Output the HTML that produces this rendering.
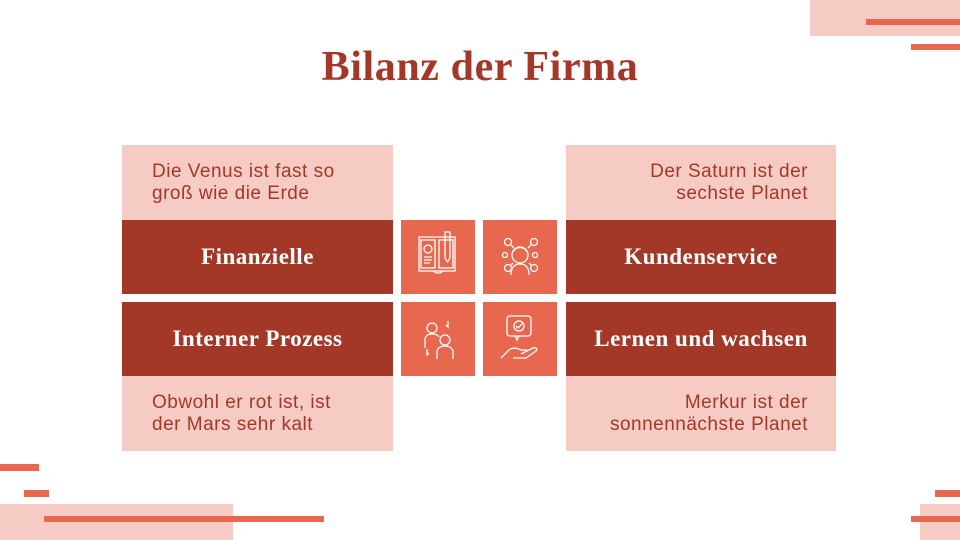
<!DOCTYPE html>
<html><head><meta charset="utf-8"><style>
body{margin:0;width:960px;height:540px;position:relative;overflow:hidden;background:#fff;font-family:"Liberation Sans",sans-serif}
.a{position:absolute}
.p{background:#f6cbc3}.o{background:#e8674f}.d{background:#a33829}
h1{position:absolute;left:0;width:960px;top:43px;margin:0;text-align:center;font-family:"Liberation Serif",serif;font-weight:bold;font-size:42px;letter-spacing:0.6px;color:#a33829}
.t{font-size:19px;letter-spacing:0.5px;line-height:22px;color:#a33829;box-sizing:border-box;padding-top:16px}
.l{color:#fff;font-family:"Liberation Serif",serif;font-weight:bold;font-size:23px;letter-spacing:0.5px;display:flex;align-items:center;justify-content:center}
svg{position:absolute}
</style></head><body>
<div class="a p" style="left:810px;top:0;width:150px;height:36px"></div>
<div class="a o" style="left:866px;top:19px;width:94px;height:6px"></div>
<div class="a o" style="left:911px;top:44px;width:49px;height:6px"></div>
<div class="a o" style="left:0;top:464px;width:39px;height:7px"></div>
<div class="a o" style="left:24px;top:490px;width:25px;height:7px"></div>
<div class="a p" style="left:0;top:504px;width:233px;height:36px"></div>
<div class="a o" style="left:44px;top:516px;width:280px;height:6px"></div>
<div class="a o" style="left:935px;top:490px;width:25px;height:7px"></div>
<div class="a p" style="left:920px;top:504px;width:40px;height:36px"></div>
<div class="a o" style="left:911px;top:516px;width:49px;height:6px"></div>
<h1>Bilanz der Firma</h1>

<div class="a p t" style="left:122px;top:145px;width:271px;height:75px;padding-left:30px">Die Venus ist fast so<br>groß wie die Erde</div>
<div class="a d l" style="left:122px;top:220px;width:271px;height:74px">Finanzielle</div>
<div class="a d l" style="left:122px;top:302px;width:271px;height:74px">Interner Prozess</div>
<div class="a p t" style="left:122px;top:376px;width:271px;height:75px;padding-left:30px">Obwohl er rot ist, ist<br>der Mars sehr kalt</div>

<div class="a p t" style="left:566px;top:145px;width:270px;height:75px;padding-right:28px;text-align:right">Der Saturn ist der<br>sechste Planet</div>
<div class="a d l" style="left:566px;top:220px;width:270px;height:74px">Kundenservice</div>
<div class="a d l" style="left:566px;top:302px;width:270px;height:74px">Lernen und wachsen</div>
<div class="a p t" style="left:566px;top:376px;width:270px;height:75px;padding-right:28px;text-align:right">Merkur ist der<br>sonnennächste Planet</div>

<div class="a o" style="left:401px;top:220px;width:74px;height:74px"></div>
<div class="a o" style="left:483px;top:220px;width:74px;height:74px"></div>
<div class="a o" style="left:401px;top:302px;width:74px;height:74px"></div>
<div class="a o" style="left:483px;top:302px;width:74px;height:74px"></div>

<svg style="left:401px;top:220px" width="74" height="74" fill="none" stroke="#fff" stroke-width="1.3">
<path d="M18 17h36v34H18z M20 20h14v28H20z M38 20h14v28H38z M18 51h14l3 2h4l3-2h12"/>
<circle cx="27" cy="29" r="4"/><path d="M23 37h8M23 40h8M23 43h6"/>
<path d="M44 12h5v26l-2.5 4-2.5-4z"/>
</svg>
<svg style="left:483px;top:220px" width="74" height="74" fill="none" stroke="#fff" stroke-width="1.3">
<circle cx="37" cy="35" r="8"/><path d="M28 55c0-8 4-11 9-11s9 3 9 11M30 32c3-6 11-6 14 0"/>
<circle cx="25" cy="22" r="3.5"/><circle cx="51" cy="22" r="3.5"/><circle cx="22" cy="35" r="2.5"/><circle cx="52" cy="35" r="2.5"/><circle cx="25" cy="48" r="3.5"/><circle cx="51" cy="48" r="3.5"/>
<path d="M28 25l3 3M48 25l-3 3M28 45l2-2M48 45l-2-2"/>
</svg>
<svg style="left:401px;top:302px" width="74" height="74" fill="none" stroke="#fff" stroke-width="1.3">
<circle cx="31" cy="26" r="5"/><path d="M24 46v-8c0-4 3-6 7-6s6 1 7 3"/>
<circle cx="44" cy="38" r="5"/><path d="M36 57v-7c0-4 4-6 8-6s8 2 8 6v7"/>
<path d="M47 19v6l-2-2M26 47v6l2-2"/>
</svg>
<svg style="left:483px;top:302px" width="74" height="74" fill="none" stroke="#fff" stroke-width="1.3">
<rect x="24" y="14" width="24" height="20" rx="3"/><path d="M32 34l2 4 2-4"/>
<circle cx="36" cy="24" r="5"/><path d="M33 24l2 2 5-5"/>
<path d="M18 56l8-8c4-3 8-2 12 0h6M38 52l12-6c3-1 5 1 3 3l-10 7H30"/>
</svg>
</body></html>
